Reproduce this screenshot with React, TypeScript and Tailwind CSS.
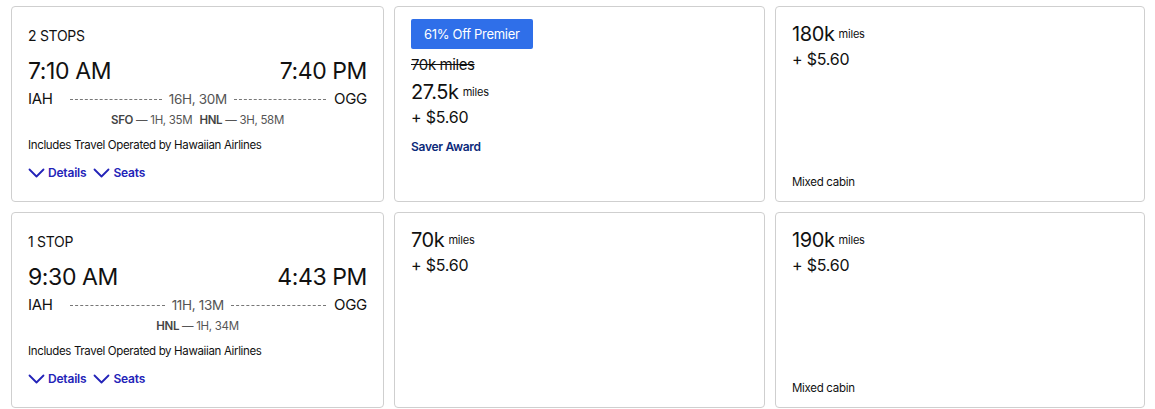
type Flight = {
  stops: string;
  depart: string;
  arrive: string;
  duration: string;
  layovers: { code: string; time: string }[];
};

type Fare = {
  badge?: string;
  oldMiles?: string;
  miles: string;
  saver?: boolean;
  mixed?: boolean;
};

const rows: { flight: Flight; fares: Fare[] }[] = [
  {
    flight: {
      stops: "2 STOPS",
      depart: "7:10 AM",
      arrive: "7:40 PM",
      duration: "16H, 30M",
      layovers: [
        { code: "SFO", time: "1H, 35M" },
        { code: "HNL", time: "3H, 58M" },
      ],
    },
    fares: [
      { badge: "61% Off Premier", oldMiles: "70k miles", miles: "27.5k", saver: true },
      { miles: "180k", mixed: true },
    ],
  },
  {
    flight: {
      stops: "1 STOP",
      depart: "9:30 AM",
      arrive: "4:43 PM",
      duration: "11H, 13M",
      layovers: [{ code: "HNL", time: "1H, 34M" }],
    },
    fares: [{ miles: "70k" }, { miles: "190k", mixed: true }],
  },
];

function Chevron() {
  return (
    <svg width="17" height="10" viewBox="0 0 17 10" fill="none" stroke="currentColor" strokeWidth="1.8" strokeLinecap="round" strokeLinejoin="round">
      <polyline points="1.5,1.5 8.5,8.5 15.5,1.5" />
    </svg>
  );
}

function FlightCard({ flight }: { flight: Flight }) {
  return (
    <div className="flex h-[196px] flex-col rounded border border-[#cfcfcf] bg-white px-4 pt-[19px]">
      <div className="text-[14px] leading-5 tracking-[-0.3px] text-[#111]">{flight.stops}</div>
      <div className="mt-[11px] flex items-center justify-between text-[23px] leading-7 tracking-[-0.4px] text-[#111]">
        <span>{flight.depart}</span>
        <span>{flight.arrive}</span>
      </div>
      <div className="mt-[4px] flex items-center text-[15px] leading-5 tracking-[-0.3px] text-[#111]">
        <span>IAH</span>
        <div className="mr-[8px] ml-[17px] flex flex-1 items-center gap-[7px]">
          <div className="flex-1 border-t border-dashed border-[#777]" />
          <span className="text-[13.5px] tracking-[-0.3px] text-[#555]">{flight.duration}</span>
          <div className="flex-1 border-t border-dashed border-[#777]" />
        </div>
        <span>OGG</span>
      </div>
      <div className="mt-[3px] flex justify-center gap-[7px] text-[11.5px] leading-4 tracking-[-0.3px] text-[#555]">
        {flight.layovers.map((l) => (
          <span key={l.code}>
            <span className="font-semibold text-[#444]">{l.code}</span> — {l.time}
          </span>
        ))}
      </div>
      <div className="mt-[9px] text-[11.5px] leading-4 tracking-[-0.35px] text-[#111]">
        Includes Travel Operated by Hawaiian Airlines
      </div>
      <div className="mt-[12px] flex items-center gap-[7px] text-[12px] font-semibold leading-4 tracking-[-0.2px] text-[#2323b8]">
        <span className="flex items-center gap-[3px]">
          <Chevron />
          Details
        </span>
        <span className="flex items-center gap-[3px]">
          <Chevron />
          Seats
        </span>
      </div>
    </div>
  );
}

function FareCard({ fare }: { fare: Fare }) {
  return (
    <div className="flex h-[196px] flex-col rounded border border-[#cfcfcf] bg-white px-4 pt-[12px] pb-[11px]">
      {fare.badge && (
        <div className="mb-[6px] self-start rounded-[2px] bg-[#2f6fe9] px-[13px] py-[6px] text-[13px] leading-[18px] tracking-[-0.3px] text-white">
          {fare.badge}
        </div>
      )}
      {fare.oldMiles && (
        <div className="text-[15px] leading-5 tracking-[-0.4px] text-[#111] line-through">{fare.oldMiles}</div>
      )}
      <div className={`flex items-center gap-[4px] text-[#111] ${fare.badge ? "mt-[5px]" : "mt-[3px]"}`}>
        <span className="text-[20px] leading-6 tracking-[-0.4px]">{fare.miles}</span>
        <span className="text-[11px] tracking-[-0.2px]">miles</span>
      </div>
      <div className="mt-[1px] text-[16px] leading-6 tracking-[-0.2px] text-[#111]">+ $5.60</div>
      {fare.saver && (
        <div className="mt-[10px] text-[12px] font-semibold leading-4 tracking-[-0.3px] text-[#0c2a7a]">Saver Award</div>
      )}
      {fare.mixed && (
        <div className="mt-auto text-[11.5px] leading-4 tracking-[-0.3px] text-[#111]">Mixed cabin</div>
      )}
    </div>
  );
}

export default function App() {
  return (
    <div
      className="min-h-[409px] bg-white pt-[6px] pr-[10px] pl-[11px]"
      style={{ fontFamily: "Inter, 'Liberation Sans', sans-serif" }}
    >
      <div className="grid grid-cols-[373px_371px_370px] gap-x-[10px] gap-y-[10px]">
        {rows.map((r, i) => (
          <div key={i} className="contents">
            <FlightCard flight={r.flight} />
            {r.fares.map((f, j) => (
              <FareCard key={j} fare={f} />
            ))}
          </div>
        ))}
      </div>
    </div>
  );
}
